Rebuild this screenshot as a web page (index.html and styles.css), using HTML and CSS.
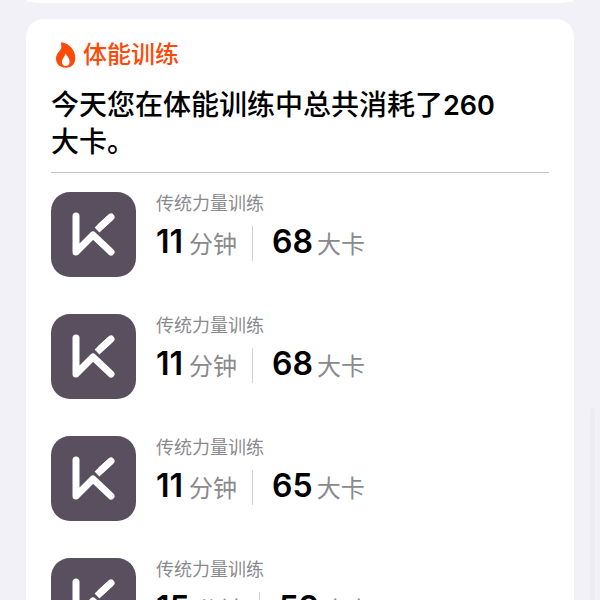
FILE: index.html
```html
<!DOCTYPE html>
<html lang="zh-CN">
<head>
    <meta charset="UTF-8">
    <meta name="viewport" content="width=device-width, initial-scale=1">
    <title>体能训练</title>
    <link rel="stylesheet" href="styles.css">
</head>
<body>

<!--图标只定义一次,下面每一行用use引用-->
<svg class="defs" aria-hidden="true">
    <symbol id="logo" viewBox="0 0 85 85">
        <g fill="none" stroke="#fff" stroke-width="7" stroke-linecap="round" stroke-linejoin="round">
            <path d="M25 24V60L42 43L60 60"/>
            <path d="M60 25L46 38" stroke-linecap="butt"/>
            <path d="M60 25L50 34"/>
        </g>
    </symbol>
</svg>

<div class="page">
    <div class="card prev"></div>

    <div class="card">
        <h2 class="title">
            <svg class="fire" viewBox="0 0 20 26" aria-hidden="true">
                <path fill="#fc4a0a" fill-rule="evenodd" d="M6 0.300C13 1.500 19.300 8 19.300 16C19.300 22 15.500 25.800 9.800 25.800C4 25.800 0 22 0 16.500C0 13.500 1.500 11 3.500 9C5 7.500 5.600 6 5.200 3.500C5 2 4.800 0.200 6 0.300ZM9.300 11.500C9.300 14.500 6 16.500 6 20C6 22.500 7.500 24 9.800 24C12 24 13.600 22.500 13.600 20C13.600 16.500 11.500 14.500 9.300 11.500Z"/>
            </svg>
            体能训练
        </h2>
        <p class="summary">今天您在体能训练中总共消耗了<span class="num">260</span> <span class="unit">大卡。</span></p>

        <ul class="list">
            <li>
                <svg class="logo" aria-hidden="true"><use href="#logo"/></svg>
                <div class="info">
                    <h3>传统力量训练</h3>
                    <div class="data">
                        <span class="time"><b>11</b>分钟</span>
                        <span class="energy"><b>68</b>大卡</span>
                    </div>
                </div>
            </li>
            <li>
                <svg class="logo" aria-hidden="true"><use href="#logo"/></svg>
                <div class="info">
                    <h3>传统力量训练</h3>
                    <div class="data">
                        <span class="time"><b>11</b>分钟</span>
                        <span class="energy"><b>68</b>大卡</span>
                    </div>
                </div>
            </li>
            <li>
                <svg class="logo" aria-hidden="true"><use href="#logo"/></svg>
                <div class="info">
                    <h3>传统力量训练</h3>
                    <div class="data">
                        <span class="time"><b>11</b>分钟</span>
                        <span class="energy"><b>65</b>大卡</span>
                    </div>
                </div>
            </li>
            <li>
                <svg class="logo" aria-hidden="true"><use href="#logo"/></svg>
                <div class="info">
                    <h3>传统力量训练</h3>
                    <div class="data">
                        <span class="time"><b>15</b>分钟</span>
                        <span class="energy"><b>59</b>大卡</span>
                    </div>
                </div>
            </li>
        </ul>
    </div>
</div>

<div class="scrollbar"></div>

</body>
</html>
```
FILE: styles.css
```css
* {
    margin: 0;
    padding: 0;
    box-sizing: border-box;
}

ul, li {
    list-style: none;
}

body{
    background: #f2f1f7;
    color: #000;
    font-family: Inter, "Noto Sans CJK SC", sans-serif;
}
.defs{
    display: none;
}
/*超出屏幕的部分不显示*/
.page{
    height: 100vh;
    padding: 0 26px;
    overflow: hidden;
}
.card{
    padding: 20px 25px;
    border-radius: 18px;
    background: #fff;
}
.card.prev{
    height: 3px;
    margin-bottom: 16px;
    padding: 0;
    border-radius: 0 0 18px 18px / 0 0 3px 3px;
}

.title{
    display: flex;
    align-items: center;
    gap: 7px;
    padding-left: 5px;
    line-height: 32px;
    font-size: 24px;
    font-weight: 500;
    color: #fc4a0a;
}
.title .fire{
    width: 20px;
    height: 26px;
}
.summary{
    padding: 16px 0 12px;
    border-bottom: 1px solid #c6c6c8;
    line-height: 36px;
    font-size: 28px;
    font-weight: 500;
}
.summary .num{
    font-size: 27px;
    font-weight: 600;
}
/*数字后面的单位整体换行*/
.summary .unit{
    display: inline-block;
    padding-right: 32px;
}

.list{
    padding-top: 19px;
}
.list li{
    display: flex;
    gap: 20px;
    margin-bottom: 37px;
}
.list .logo{
    flex: none;
    width: 85px;
    height: 85px;
    border-radius: 19px;
    background: #594f5f;
}
.info h3{
    line-height: 24px;
    font-size: 18px;
    font-weight: 400;
    color: #8a8a8e;
}
.data{
    display: flex;
    margin-top: 10px;
    line-height: 32px;
    font-size: 24px;
    color: #8a8a8e;
}
.data span{
    display: flex;
    align-items: baseline;
    gap: 6px;
}
.data b{
    font-size: 32px;
    font-weight: 600;
    color: #000;
}
.data .energy{
    gap: 4px;
    margin-left: 15px;
    padding-left: 19px;
    border-left: 1px solid #d1d1d6;
}

.scrollbar{
    position: fixed;
    right: 5px;
    top: 68%;
    bottom: 0;
    width: 5px;
    border-radius: 3px 3px 0 0;
    background: #edecf2;
}
```
